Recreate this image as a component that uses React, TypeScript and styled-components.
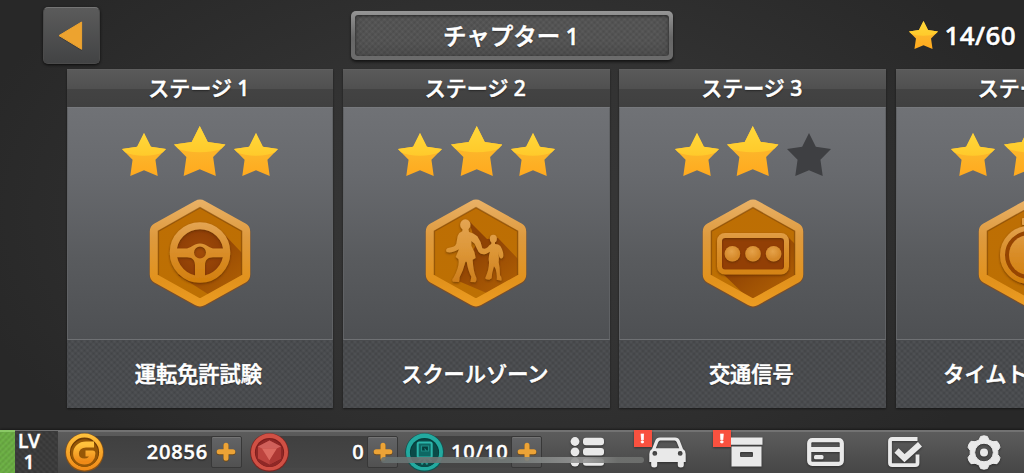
import React from 'react';
import styled, { createGlobalStyle, css } from 'styled-components';

const GlobalStyle = createGlobalStyle`
  * { box-sizing: border-box; }
  html, body { margin: 0; padding: 0; background: #2b2b2b; }
  body { overflow: hidden; }
  svg { display: block; flex: none; }
`;

const mesh = css`
  background-image:
    repeating-linear-gradient(45deg, rgba(255, 255, 255, 0.04) 0, transparent 2.121px, rgba(255, 255, 255, 0.04) 4.243px),
    repeating-linear-gradient(-45deg, rgba(0, 0, 0, 0.09) 0, transparent 2.121px, rgba(0, 0, 0, 0.09) 4.243px);
`;

const Screen = styled.div`
  position: relative;
  width: 1024px;
  height: 473px;
  overflow: hidden;
  display: flex;
  flex-direction: column;
  color: #fff;
  font-family: 'Noto Sans', 'Noto Sans CJK JP', sans-serif;
  font-weight: 500;
  -webkit-text-stroke: 0.55px #fff;
  background: radial-gradient(ellipse 560px 330px at 50% 45%, #373737 0%, #323232 50%, #282828 100%);
`;

const TopBar = styled.header`
  height: 69px;
  flex: none;
  display: grid;
  grid-template-columns: 351px 322px 1fr;
  align-items: start;
`;

const BackButton = styled.button`
  width: 57px;
  height: 57px;
  margin: 7px 0 0 43px;
  padding: 0 2px 0 0;
  border: 1px solid #4b4b4b;
  border-top-color: #757575;
  border-radius: 5px;
  display: flex;
  align-items: center;
  justify-content: center;
  background: linear-gradient(#5b5b5b, #424344);
  box-shadow: 0 1px 3px rgba(0, 0, 0, 0.75);
`;

const ChapterPlate = styled.div`
  height: 49px;
  margin-top: 11px;
  border-radius: 5px;
  padding: 4px;
  background: linear-gradient(#969696, #666 55%, #6c6c6c);
  box-shadow: 0 2px 3px rgba(0, 0, 0, 0.6);
`;

const ChapterFace = styled.div`
  height: 100%;
  border-radius: 3px;
  ${mesh}
  background-color: #545454;
  box-shadow: inset 0 1px 3px rgba(0, 0, 0, 0.55), inset 0 -6px 12px rgba(0, 0, 0, 0.12);
  display: flex;
  align-items: center;
  justify-content: center;
  font-size: 23.5px;
  word-spacing: -1px;
  line-height: 30px;
  padding-right: 2px;
  text-shadow: 0 1px 2px rgba(0, 0, 0, 0.6);
  white-space: pre;
`;

const Score = styled.div`
  display: flex;
  justify-content: flex-end;
  align-items: center;
  gap: 6.5px;
  height: 32px;
  margin: 19px 8px 0 0;
  font-size: 26px;
  letter-spacing: 0.4px;
  text-shadow: 0 1px 2px rgba(0, 0, 0, 0.7);
`;

const Stages = styled.main`
  height: 339px;
  flex: none;
  padding-left: 66.5px;
  display: flex;
  gap: 9.8px;
`;

const Card = styled.article`
  flex: none;
  width: 266.7px;
  height: 339px;
  display: flex;
  flex-direction: column;
  box-shadow: 0 1px 2px rgba(0, 0, 0, 0.45);
`;

const CardHead = styled.div`
  height: 38px;
  border-top: 1px solid #5f5f5f;
  background: linear-gradient(#5a5a5a 0%, #505050 50%, #434343 51%, #404040 100%);
  display: flex;
  align-items: center;
  justify-content: center;
  padding: 0 2px 1px 0;
  font-size: 21px;
  line-height: 28px;
  white-space: pre;
  text-shadow: 0 1px 2px rgba(0, 0, 0, 0.6);
`;

const CardBody = styled.div`
  height: 233px;
  border: 1px solid #797b7e;
  border-color: #77797d #606265 #6e7073;
  background: linear-gradient(#707276 0%, #67696d 30%, #595b5e 65%, #4e5053 100%);
  display: flex;
  flex-direction: column;
  align-items: center;
  padding-top: 17px;
`;

const CardFoot = styled.div`
  height: 68px;
  ${mesh}
  background-color: #494b4e;
  display: flex;
  align-items: center;
  justify-content: center;
  padding-right: 3px;
  font-size: 21.2px;
  line-height: 28px;
  text-shadow: 0 1px 2px rgba(0, 0, 0, 0.5);
`;

const Stars = styled.div`
  display: flex;
  align-items: flex-end;
  gap: 8.5px;
  height: 51px;
  margin-bottom: 20px;
`;

const BottomBar = styled.footer`
  height: 43px;
  margin-top: 22px;
  flex: none;
  display: flex;
  background: linear-gradient(#5d5d5d, #464646);
  box-shadow: inset 0 2px 0 #727272, 0 -1px 2px rgba(0, 0, 0, 0.4);
`;

const Xp = styled.div`
  width: 15.5px;
  ${mesh}
  background-color: #6bb043;
  border-top: 2px solid #8ac866;
`;

const Level = styled.div`
  width: 43px;
  margin-top: 1px;
  ${mesh}
  background-color: #3a3a3a;
  padding-right: 16px;
  display: flex;
  flex-direction: column;
  align-items: center;
  font-size: 19.5px;
  line-height: 20.5px;
`;

const Wallet = styled.div`
  width: 490px;
  display: flex;
  align-items: center;
  padding: 2px 0 1px 6.5px;
`;

const Slot = styled.div<{ $w: number; $gap?: number }>`
  width: ${p => p.$w}px;
  margin-right: ${p => p.$gap ?? 0}px;
  height: 38px;
  display: flex;
  align-items: center;
  background: linear-gradient(#404040, #464646) 19px 3px / calc(100% - 21px) 32px no-repeat;
`;

const Amount = styled.span`
  flex: 1;
  text-align: right;
  padding: 0 3px 1px 0;
  font-size: 20px;
  letter-spacing: 0.8px;
  line-height: 30px;
  text-shadow: 0 1px 2px rgba(0, 0, 0, 0.8);
`;

const Plus = styled.button`
  width: 31px;
  height: 32px;
  flex: none;
  padding: 0;
  border: 1px solid #383838;
  border-radius: 2px;
  display: flex;
  align-items: center;
  justify-content: center;
  background: linear-gradient(#636466, #515151);
  box-shadow: inset 0 1px 0 #747474;
`;

const Menu = styled.nav`
  flex: 1;
  display: grid;
  grid-template-columns: repeat(6, 79.3px);
`;

const MenuItem = styled.div`
  position: relative;
  display: flex;
  align-items: center;
  justify-content: center;
  padding: 1px 0 0 0;
  filter: drop-shadow(0 1px 1px rgba(0, 0, 0, 0.4));
`;

const Badge = styled.span`
  position: absolute;
  top: 0;
  left: 6px;
  width: 18px;
  height: 17px;
  background: #f9513f;
  font-size: 13px;
  font-weight: 900;
  line-height: 17px;
  text-align: center;
`;

const HomeIndicator = styled.div`
  position: absolute;
  left: 381px;
  top: 457px;
  width: 263px;
  height: 6px;
  border-radius: 3px;
  background: linear-gradient(90deg, rgba(104, 114, 114, 0.9), rgba(118, 124, 122, 0.9) 50%, rgba(150, 150, 150, 0.9) 77%, rgba(112, 114, 112, 0.9) 90%);
`;

const STAR = 'M77 0 L101 47 L154 55 L117 92 L125 148 L77 128 L29 148 L37 92 L0 55 L53 47 Z';

function Star({ w, h, lit = true }: { w: number; h: number; lit?: boolean }) {
  return (
    <svg width={w} height={h} viewBox="0 0 154 148" preserveAspectRatio="none">
      <path d={STAR} fill={lit ? 'url(#starLow)' : '#3e3f42'} />
      {lit && (
        <g clipPath="url(#starClip)">
          <ellipse cx="77" cy="36" rx="100" ry="42" fill="url(#starTop)" />
        </g>
      )}
    </svg>
  );
}

function Defs() {
  return (
    <svg width="0" height="0" style={{ position: 'absolute' }}>
      <defs>
        <clipPath id="starClip"><path d={STAR} /></clipPath>
        <linearGradient id="starTop" x1="0" y1="0" x2="0" y2="1">
          <stop offset="0" stopColor="#ffd93c" /><stop offset="1" stopColor="#ffca2b" />
        </linearGradient>
        <linearGradient id="starLow" x1="0" y1="0" x2="0" y2="1">
          <stop offset="0.4" stopColor="#fcb82c" /><stop offset="1" stopColor="#ffa91e" />
        </linearGradient>
        <linearGradient id="rim" gradientUnits="userSpaceOnUse" x1="0" y1="-54" x2="0" y2="54">
          <stop offset="0" stopColor="#eab267" /><stop offset="0.35" stopColor="#de9a3e" />
          <stop offset="0.75" stopColor="#e2921c" /><stop offset="1" stopColor="#ec9c22" />
        </linearGradient>
        <linearGradient id="plate" x1="0" y1="0" x2="0" y2="1">
          <stop offset="0" stopColor="#bd6e04" /><stop offset="1" stopColor="#bd7003" />
        </linearGradient>
        <linearGradient id="metal" gradientUnits="userSpaceOnUse" x1="0" y1="-31" x2="0" y2="31">
          <stop offset="0" stopColor="#e4a554" /><stop offset="0.5" stopColor="#d98d28" /><stop offset="1" stopColor="#d27e0c" />
        </linearGradient>
        <linearGradient id="figure" gradientUnits="userSpaceOnUse" x1="0" y1="325" x2="0" y2="515">
          <stop offset="0" stopColor="#e4a554" /><stop offset="0.55" stopColor="#dc9535" /><stop offset="1" stopColor="#cd7d1c" />
        </linearGradient>
        <linearGradient id="cast" gradientUnits="userSpaceOnUse" x1="0" y1="0" x2="32" y2="38">
          <stop offset="0" stopColor="#8f4304" /><stop offset="1" stopColor="#a85804" stopOpacity="0.75" />
        </linearGradient>
        <radialGradient id="well"><stop offset="0" stopColor="#a14c08" /><stop offset="1" stopColor="#8c3d06" /></radialGradient>
        <radialGradient id="dot" cx="0.45" cy="0.35"><stop offset="0" stopColor="#e5a24a" /><stop offset="1" stopColor="#d5892a" /></radialGradient>
        <clipPath id="hexClip"><path d="M0 -46 L42 -22 V22 L0 46 L-42 22 V-22Z" /></clipPath>
        <filter id="drop" x="-20%" y="-20%" width="140%" height="150%">
          <feDropShadow dx="0" dy="1.2" stdDeviation="0.9" floodColor="#5a2500" floodOpacity="0.7" />
        </filter>
        <linearGradient id="gold" x1="0" y1="0" x2="0" y2="1">
          <stop offset="0" stopColor="#ffc23d" /><stop offset="1" stopColor="#f08a17" />
        </linearGradient>
      </defs>
    </svg>
  );
}

type Kind = 'wheel' | 'school' | 'signal' | 'timer';

function Emblem({ kind }: { kind: Kind }) {
  if (kind === 'wheel')
    return (
      <>
        <path d="M21 -22 L44 2 V30 L22 50 L-22 22 Z" fill="url(#cast)" />
        <circle cy="-0.5" r="26" fill="url(#well)" />
        <g filter="url(#drop)">
          <circle cy="-0.5" r="26.8" fill="none" stroke="url(#metal)" strokeWidth="7" />
          <path fillRule="evenodd" fill="url(#metal)" d="M-25 -4.5 H-15 C-9 -4.5 -6 -9.6 0 -9.6 C6 -9.6 9 -4.5 15 -4.5 H25 V4.3 H13 C8 4.3 5 7 5 12 V25 H-5 V12 C-5 7 -8 4.3 -13 4.3 H-25Z M0 -6.5 A6 6 0 1 0 0 5.5 A6 6 0 1 0 0 -6.5Z" />
        </g>
      </>
    );
  if (kind === 'school')
    return (
      <>
        <path d="M-7 -32 L11 -14 L22 -15 L44 8 V30 L20 44 L-20 27 L0 -8Z" fill="url(#cast)" />
        <g filter="url(#drop)">
          <g transform="scale(0.33333) translate(-228 -427)" fill="url(#figure)">
            <ellipse cx="196" cy="342" rx="15.5" ry="16" />
            <path d="M188 354 L187 362 Q176 366 173 376 L169 399 Q166 406 160 408 L142 413 Q136 417 140 424 Q152 428 166 421 L177 416 L167 439 L175 445 Q178 457 173 473 Q168 490 160 502 Q154 508 159 513 L177 514 Q179 508 179 500 Q190 480 196 453 L200 453 Q204 480 214 498 L211 514 L226 515 Q232 507 228 499 Q220 482 218 447 L227 442 Q225 422 214 405 L214 391 L224 399 Q230 413 236 424 Q245 434 259 429 L270 423 Q264 440 267 453 Q268 474 257 499 Q252 507 268 507 L275 503 Q275 488 282 467 L287 475 Q292 494 290 507 L304 510 Q307 502 300 494 Q300 471 296 455 Q298 435 294 421 L298 439 Q303 448 309 440 Q313 427 301 406 Q296 400 285 400 L285 392 L274 392 L274 400 Q268 402 263 410 Q257 416 247 413 Q243 392 232 377 Q220 367 207 364 L205 354Z" />
            <ellipse cx="280" cy="384" rx="10.5" ry="11.5" />
          </g>
        </g>
      </>
    );
  if (kind === 'signal')
    return (
      <>
        <path d="M34 -17 L44 -7 V28 L0 50 L-34 17Z" fill="url(#cast)" />
        <rect x="-33" y="-17" width="66" height="36" rx="4" fill="#923f05" />
        <g filter="url(#drop)">
          <rect x="-33.5" y="-17.5" width="67" height="36.5" rx="5.5" fill="none" stroke="url(#metal)" strokeWidth="5" />
          <circle cx="-20.6" cy="0.7" r="7.8" fill="url(#dot)" />
          <circle cx="0" cy="0.7" r="7.8" fill="url(#dot)" />
          <circle cx="20.6" cy="0.7" r="7.8" fill="url(#dot)" />
        </g>
      </>
    );
  return (
    <>
      <path d="M20 -20 L44 2 V30 L22 50 L-21 22Z" fill="url(#cast)" />
      <g filter="url(#drop)">
        <rect x="-7" y="-35" width="14" height="7" rx="1" fill="#e2a04a" />
        <circle cy="2" r="24" fill="#964406" />
        <circle cy="2" r="26.5" fill="none" stroke="url(#metal)" strokeWidth="5" />
        <circle cy="2" r="20" fill="url(#metal)" />
      </g>
    </>
  );
}

const HEX = 'M-3 -48.4 Q0 -50 3 -48.4 L43.5 -25.9 Q46 -24.4 46 -21.5 V21.5 Q46 24.4 43.5 25.9 L3 48.4 Q0 50 -3 48.4 L-43.5 25.9 Q-46 24.4 -46 21.5 V-21.5 Q-46 -24.4 -43.5 -25.9Z';

function Medal({ kind }: { kind: Kind }) {
  return (
    <svg width="104" height="114" viewBox="-52 -57 104 114">
      <path d={HEX} transform="translate(0 1)" fill="none" stroke="#8c4c16" strokeOpacity="0.65" strokeWidth="9" strokeLinejoin="round" />
      <path d={HEX} fill="url(#plate)" />
      <g clipPath="url(#hexClip)">
        <Emblem kind={kind} />
      </g>
      <path d={HEX} fill="none" stroke="url(#rim)" strokeWidth="8.4" strokeLinejoin="round" />
      <path d="M-41.6 22 V-21.8 L0 -45.4 L41.6 -21.8 V22" fill="none" stroke="#7c4205" strokeOpacity="0.6" strokeWidth="1.4" />
    </svg>
  );
}

function GoldCoin() {
  return (
    <svg width="39" height="39" viewBox="-19.5 -19.5 39 39">
      <circle r="19.3" fill="#8b5315" />
      <circle cy="-0.5" r="18.5" fill="url(#gold)" />
      <circle cy="-0.3" r="14.6" fill="#6c3a05" />
      <circle cy="0.6" r="13.8" fill="#965706" />
      <path d="M9.5 -8 H1.5 C-4.5 -8 -8.5 -4 -8.5 1 C-8.5 5.8 -5 9 0 9 C5 9 8 5.5 8 1 H1" fill="none" stroke="url(#gold)" strokeWidth="5.8" strokeLinejoin="round" />
    </svg>
  );
}

function GemCoin() {
  return (
    <svg width="39" height="39" viewBox="-19.5 -19.5 39 39">
      <circle r="19.3" fill="#7c2420" />
      <circle cy="-0.4" r="18.5" fill="#d05044" />
      <circle r="14.6" fill="#7c1d1c" />
      <circle cy="0.6" r="13.8" fill="#8f2826" />
      <path d="M0 -12 L11.5 -6 V6 L0 12 L-11.5 6 V-6Z" fill="#bd443e" />
      <path d="M0 -12 L11.5 -6 L7.5 -4 H-7.5 L-11.5 -6Z" fill="#d0605a" />
      <path d="M-7.5 -4 H7.5 L0 8Z" fill="#dc6a60" />
      <path d="M11.5 -6 V6 L0 12 V8 L7.5 -4Z" fill="#ad3834" />
    </svg>
  );
}

function FuelCoin() {
  return (
    <svg width="39" height="39" viewBox="-19.5 -19.5 39 39">
      <circle r="19.3" fill="#0d5652" />
      <circle cy="-0.4" r="18.5" fill="#23aaa0" />
      <circle r="14.6" fill="#063d3b" />
      <circle cy="0.8" r="13.8" fill="#0b4a48" />
      <rect x="-6.8" y="-10" width="14" height="15" rx="1.5" fill="#0e6763" stroke="#2bb5aa" strokeWidth="2" />
      <path d="M-3 -6.5 H4 V-1.5 H-3Z M0 -4 L2 -1.5" fill="#063d3b" stroke="#1c8d86" strokeWidth="1.2" />
      <path d="M-6 9 L-3 6 H4 L7 9 M-3 12 L0 8 L3 12" fill="none" stroke="#22988f" strokeWidth="2" />
    </svg>
  );
}

function PlusIcon() {
  return (
    <svg width="20" height="20" viewBox="0 0 20 20">
      <path d="M10 4 V17 M3.2 10.5 H16.8" stroke="#6b4a1e" strokeWidth="5.6" strokeLinecap="round" />
      <path d="M10 3.3 V16.3 M3.2 9.8 H16.8" stroke="#eca336" strokeWidth="5" strokeLinecap="round" />
    </svg>
  );
}

const ink = '#e9e9e9';

const ListIcon = () => (
  <svg width="35" height="30" viewBox="0 0 35 30" fill={ink}>
    {[4.5, 14.8, 25.1].map(y => (
      <g key={y}>
        <circle cx="5" cy={y} r="4.4" />
        <rect x="13" y={y - 3.7} width="21" height="7.4" rx="3" />
      </g>
    ))}
  </svg>
);

const CarIcon = () => (
  <svg width="37" height="31" viewBox="0 0 37 31" fill={ink}>
    <path fillRule="evenodd" d="M11 0.5 H26 Q29.5 0.5 30.8 3.7 L34 12 Q36.7 13.5 36.7 17 V25 H34.8 V28 Q34.8 30.5 31.8 30.5 Q28.8 30.5 28.8 28 V25 H8.2 V28 Q8.2 30.5 5.2 30.5 Q2.2 30.5 2.2 28 V25 H0.3 V17 Q0.3 13.5 3 12 L6.2 3.7 Q7.5 0.5 11 0.5Z M11.4 3.6 Q9.8 3.6 9.2 5.2 L6.8 11.2 H30.2 L27.8 5.2 Q27.2 3.6 25.6 3.6Z M5.8 14 A2.4 2.4 0 1 0 5.8 18.8 A2.4 2.4 0 1 0 5.8 14Z M31.2 14 A2.4 2.4 0 1 0 31.2 18.8 A2.4 2.4 0 1 0 31.2 14Z" />
  </svg>
);

const BoxIcon = () => (
  <svg width="33" height="30" viewBox="0 0 33 30" fill={ink}>
    <path d="M0.5 0.5 H32.5 V7.8 H0.5Z" />
    <path fillRule="evenodd" d="M1.5 9.5 H31.5 V29.5 H1.5Z M11 15 Q10 15 10 16.2 V18.8 Q10 20 11 20 H22 Q23 20 23 18.8 V16.2 Q23 15 22 15Z" />
  </svg>
);

const CardIcon = () => (
  <svg width="37" height="28" viewBox="0 0 37 28">
    <rect x="2.2" y="2.2" width="32.6" height="23.6" rx="3" fill="none" stroke={ink} strokeWidth="4.2" />
    <rect x="2" y="9" width="33" height="5" fill={ink} />
    <rect x="7" y="17" width="9.5" height="4.2" rx="1.5" fill={ink} />
  </svg>
);

const CheckIcon = () => (
  <svg width="34" height="30" viewBox="0 0 34 30" fill="none" stroke={ink}>
    <path d="M29.5 17.5 V26 Q29.5 28.1 27.2 28.1 H4.2 Q2 28.1 2 26 V4.2 Q2 2 4.2 2 H29.5" strokeWidth="3.8" />
    <path d="M8.5 13.5 L16.5 21.2 L32 7.2" strokeWidth="6" />
  </svg>
);

const GearIcon = () => (
  <svg width="34" height="35" viewBox="-17 -17.5 34 35">
    <path fillRule="evenodd" fill={ink} stroke={ink} strokeWidth="1" strokeLinejoin="round" d="M-3.4 -16 Q0 -17.4 3.4 -16 L5 -12.4 L9 -10.8 L13 -11.2 Q15.6 -8.6 16 -5.2 L13.8 -2 V2 L16 5.2 Q15.6 8.6 13 11.2 L9 10.8 L5 12.4 L3.4 16 Q0 17.4 -3.4 16 L-5 12.4 L-9 10.8 L-13 11.2 Q-15.6 8.6 -16 5.2 L-13.8 2 V-2 L-16 -5.2 Q-15.6 -8.6 -13 -11.2 L-9 -10.8 L-5 -12.4Z M0 -9.3 A9.3 9.3 0 1 0 0 9.3 A9.3 9.3 0 1 0 0 -9.3Z" />
    <circle r="4" fill={ink} />
  </svg>
);

const stages: { title: string; name: string; stars: number; kind: Kind }[] = [
  { title: 'ステージ 1', name: '運転免許試験', stars: 3, kind: 'wheel' },
  { title: 'ステージ 2', name: 'スクールゾーン', stars: 3, kind: 'school' },
  { title: 'ステージ 3', name: '交通信号', stars: 2, kind: 'signal' },
  { title: 'ステージ 4', name: 'タイムトライアル', stars: 3, kind: 'timer' },
];

const menu = [
  { Icon: ListIcon, alert: false },
  { Icon: CarIcon, alert: true },
  { Icon: BoxIcon, alert: true },
  { Icon: CardIcon, alert: false },
  { Icon: CheckIcon, alert: false },
  { Icon: GearIcon, alert: false },
];

export default function App() {
  return (
    <>
      <GlobalStyle />
      <Screen>
        <Defs />
        <TopBar>
          <BackButton aria-label="Back">
            <svg width="26" height="32" viewBox="0 0 26 32">
              <path d="M24 3.5 V31 L1 17Z" fill="#2e2e2e" opacity="0.5" />
              <path d="M23.6 2 V29.3 L1 15.6Z" fill="#eda32f" stroke="#eda32f" strokeLinejoin="round" />
            </svg>
          </BackButton>
          <ChapterPlate><ChapterFace>チャプター 1</ChapterFace></ChapterPlate>
          <Score><Star w={29} h={28} />14/60</Score>
        </TopBar>
        <Stages>
          {stages.map(s => (
            <Card key={s.kind}>
              <CardHead>{s.title}</CardHead>
              <CardBody>
                <Stars>
                  <Star w={44} h={43} lit={s.stars > 0} />
                  <Star w={51.5} h={50} lit={s.stars > 1} />
                  <Star w={44} h={43} lit={s.stars > 2} />
                </Stars>
                <Medal kind={s.kind} />
              </CardBody>
              <CardFoot>{s.name}</CardFoot>
            </Card>
          ))}
        </Stages>
        <BottomBar>
          <Xp />
          <Level><span>LV</span><span>1</span></Level>
          <Wallet>
            <Slot $w={177} $gap={8.5}><GoldCoin /><Amount>20856</Amount><Plus><PlusIcon /></Plus></Slot>
            <Slot $w={148} $gap={7}><GemCoin /><Amount>0</Amount><Plus><PlusIcon /></Plus></Slot>
            <Slot $w={137}><FuelCoin /><Amount>10/10</Amount><Plus><PlusIcon /></Plus></Slot>
          </Wallet>
          <Menu>
            {menu.map(({ Icon, alert }, i) => (
              <MenuItem key={i}><Icon />{alert && <Badge>!</Badge>}</MenuItem>
            ))}
          </Menu>
        </BottomBar>
        <HomeIndicator />
      </Screen>
    </>
  );
}
